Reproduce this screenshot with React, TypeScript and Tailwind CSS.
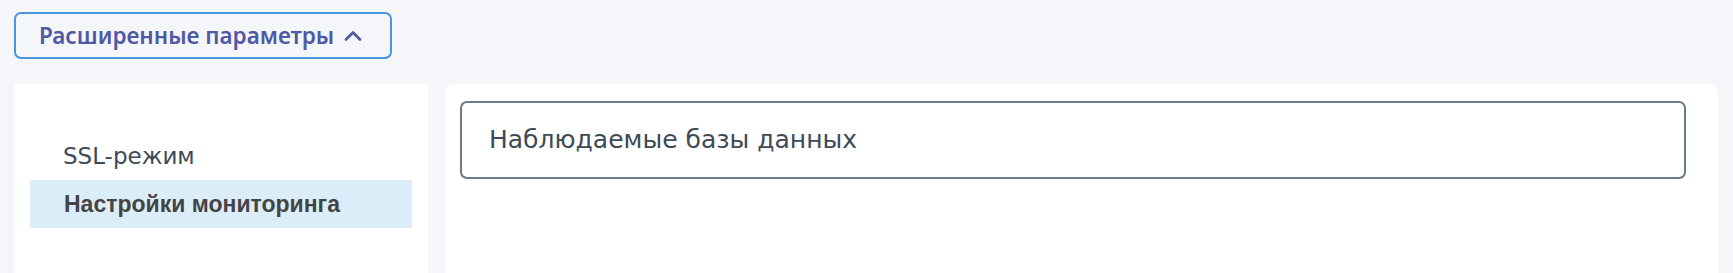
import { ChevronUp } from "lucide-react"

const menu = [
  { label: "SSL-режим", active: false },
  { label: "Настройки мониторинга", active: true },
]

export default function App() {
  return (
    <div className="min-h-[273px] bg-[#f5f6fa] pl-[14px] pr-[15px] pt-[12px] font-['DejaVu_Sans',sans-serif]">
      <button className="flex h-[47px] w-[378px] items-center justify-center gap-[5px] rounded-[7px] border-2 border-[#4a95e0] bg-[#f5f6fa] font-['Noto_Sans',sans-serif] text-[22.5px] font-semibold text-[#5059a3]">
        Расширенные параметры
        <ChevronUp className="h-[28px] w-[28px]" strokeWidth={2.4} />
      </button>

      <div className="mt-[25px] flex gap-[17px]">
        <div className="h-[189px] w-[414px] shrink-0 bg-white px-[16px] pt-[48px]">
          {menu.map((item) => (
            <div
              key={item.label}
              className={
                item.active
                  ? "flex h-[48px] items-center bg-[#dcedfa] pl-[34px] font-['Liberation_Sans',sans-serif] text-[23px] font-bold text-[#444444]"
                  : "flex h-[48px] items-center pl-[33px] text-[23px] text-[#3d4a57]"
              }
            >
              {item.label}
            </div>
          ))}
        </div>

        <div className="h-[189px] flex-1 rounded-t-[8px] bg-white pl-[15px] pr-[32px] pt-[17px]">
          <div className="flex h-[78px] items-center rounded-[7px] border-2 border-[#6b7b89] pl-[27px] text-[25px] text-[#3d4a57]">
            Наблюдаемые базы данных
          </div>
        </div>
      </div>
    </div>
  )
}
